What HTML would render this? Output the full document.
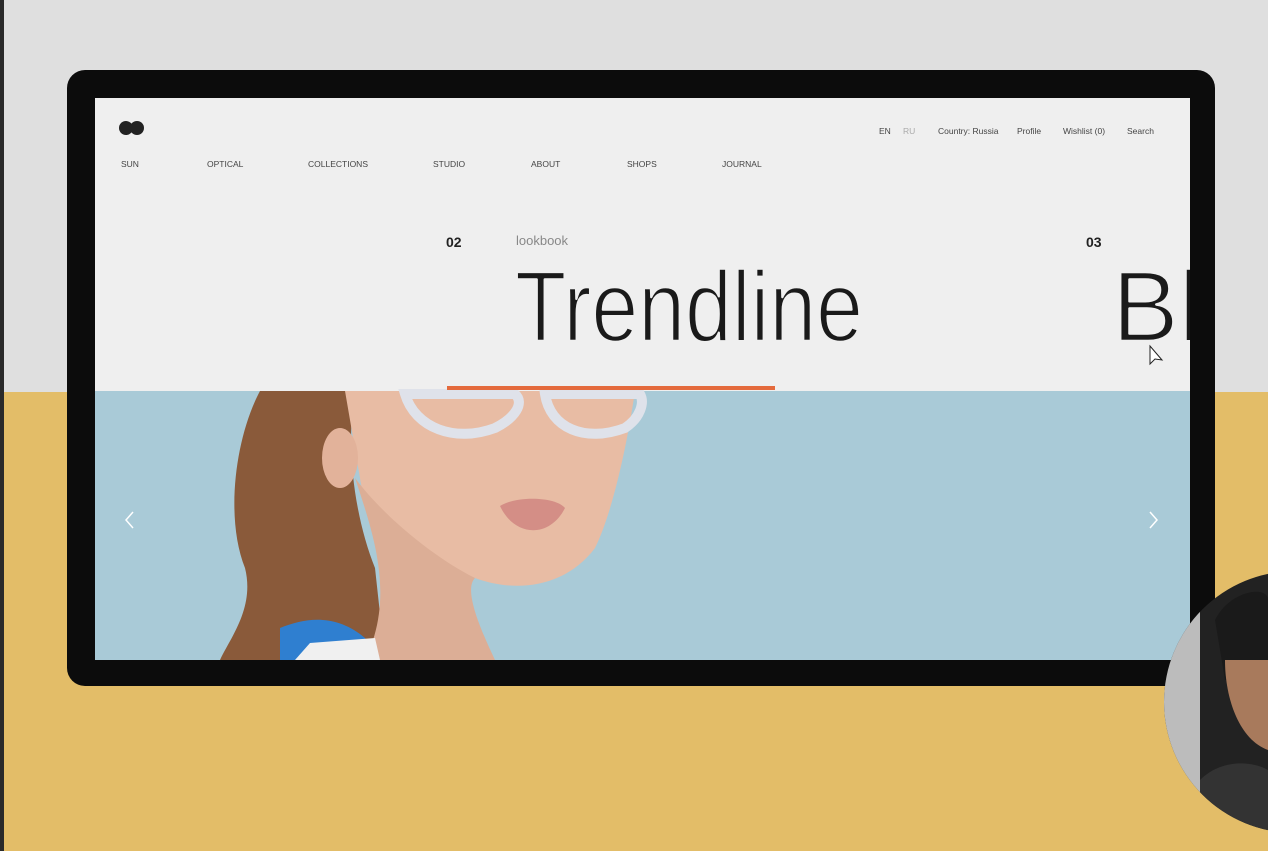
<!DOCTYPE html>
<html><head><meta charset="utf-8"><style>
*{margin:0;padding:0;box-sizing:border-box}
body{width:1268px;height:851px;overflow:hidden;position:relative;background:#e3bd68;font-family:"Liberation Sans",sans-serif}
.top{position:absolute;left:0;top:0;width:1268px;height:392px;background:#dfdfdf}
.lstrip{position:absolute;left:0;top:0;width:4px;height:851px;background:#2a2a2a}
.frame{position:absolute;left:67px;top:70px;width:1148px;height:616px;background:#0c0c0c;border-radius:18px}
.screen{position:absolute;left:95px;top:98px;width:1095px;height:562px;background:#efefef;overflow:hidden}
.t{position:absolute;font-size:8.5px;color:#444;white-space:nowrap}
</style></head><body>
<div class="top"></div><div class="lstrip"></div>
<div class="frame"></div>
<div class="screen">
<svg width="1095" height="562" style="position:absolute;left:0;top:0">
<circle cx="31" cy="30" r="7" fill="#222"/><circle cx="42" cy="30" r="7" fill="#222"/>
<rect x="0" y="293" width="1095" height="269" fill="#a9cad7"/>
<path d="M165 293 C140 340 130 420 150 470 C160 510 135 540 125 562 L290 562 L280 470 C260 420 250 350 260 293 Z" fill="#8a5a3a"/>
<path d="M250 293 L540 293 C530 360 515 420 500 450 C470 490 420 495 380 480 C350 470 270 430 265 380 Z" fill="#e8bca4"/>
<path d="M260 380 C280 440 300 500 270 562 L400 562 C380 520 370 490 380 480 C340 460 290 420 260 380Z" fill="#dcae96"/>
<ellipse cx="245" cy="360" rx="18" ry="30" fill="#e2b29a"/>
<path d="M310 296 C320 330 360 345 400 330 C420 320 430 305 420 296Z M450 296 C455 330 490 345 530 330 C545 320 550 305 545 296Z" fill="none" stroke="#dfe2ea" stroke-width="10"/>
<path d="M405 408 C420 398 460 398 470 410 C455 440 420 440 405 408Z" fill="#d48e86"/>
<path d="M185 530 C210 520 240 515 270 540 L285 562 L185 562Z" fill="#2f7fd0"/>
<path d="M215 545 L280 540 L285 562 L200 562Z" fill="#f0f0f0"/>
<rect x="352" y="288" width="328" height="4" fill="#e46a3c"/>
<path d="M38 414 L31 422 L38 430" fill="none" stroke="#fff" stroke-width="1.5"/>
<path d="M1055 414 L1062 422 L1055 430" fill="none" stroke="#fff" stroke-width="1.5"/>
<text x="420" y="243" font-family="Liberation Sans" font-size="100" fill="#1a1a1a" stroke="#efefef" stroke-width="2.5" stroke-linejoin="round" textLength="348" lengthAdjust="spacingAndGlyphs">Trendline</text>
<text x="1017" y="243" font-family="Liberation Sans" font-size="100" fill="#1a1a1a" stroke="#efefef" stroke-width="2.5" stroke-linejoin="round">Bl</text>
<path d="M1055 248 L1055 266 L1060 261 L1067 262 Z" fill="#fff" stroke="#222" stroke-width="1"/>
</svg>
<div class="t" style="left:26px;top:61px">SUN</div>
<div class="t" style="left:112px;top:61px">OPTICAL</div>
<div class="t" style="left:213px;top:61px">COLLECTIONS</div>
<div class="t" style="left:338px;top:61px">STUDIO</div>
<div class="t" style="left:436px;top:61px">ABOUT</div>
<div class="t" style="left:532px;top:61px">SHOPS</div>
<div class="t" style="left:627px;top:61px">JOURNAL</div>
<div class="t" style="left:784px;top:28px">EN</div>
<div class="t" style="left:808px;top:28px;color:#aaa">RU</div>
<div class="t" style="left:843px;top:28px">Country: Russia</div>
<div class="t" style="left:922px;top:28px">Profile</div>
<div class="t" style="left:968px;top:28px">Wishlist (0)</div>
<div class="t" style="left:1032px;top:28px">Search</div>
<div class="t" style="left:351px;top:136px;font-size:14px;font-weight:bold;color:#222">02</div>
<div class="t" style="left:991px;top:136px;font-size:14px;font-weight:bold;color:#222">03</div>
<div class="t" style="left:421px;top:135px;font-size:13px;color:#888">lookbook</div>
</div>
<svg width="1268" height="851" style="position:absolute;left:0;top:0">
<defs><clipPath id="c"><circle cx="1295" cy="702" r="131"/></clipPath></defs>
<g clip-path="url(#c)">
<rect x="1160" y="570" width="110" height="270" fill="#222"/>
<rect x="1160" y="570" width="40" height="270" fill="#bcbcbc"/>
<path d="M1215 620 C1230 590 1268 585 1268 600 L1268 680 L1225 680Z" fill="#1a1a1a"/>
<path d="M1225 660 C1225 700 1240 740 1268 750 L1268 660Z" fill="#a87a5c"/>
<path d="M1200 780 C1220 760 1250 760 1268 770 L1268 840 L1200 840Z" fill="#333"/>
</g></svg>
</body></html>
